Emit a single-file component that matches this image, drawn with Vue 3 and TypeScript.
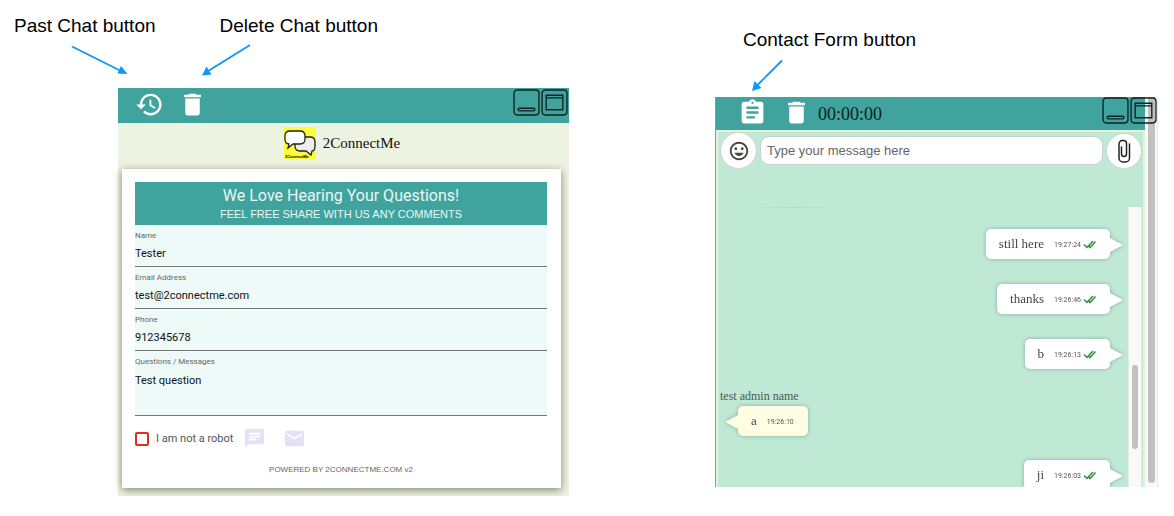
<script setup lang="ts">
import { ref } from 'vue'

interface Message {
  id: number
  text: string
  time: string
  author?: string
}

const form = ref({
  name: 'Tester',
  email: 'test@2connectme.com',
  phone: '912345678',
  question: 'Test question',
})
const notRobot = ref(false)
const draft = ref('')

const messages: Message[] = [
  { id: 1, text: 'still here', time: '19:27:24' },
  { id: 2, text: 'thanks', time: '19:26:46' },
  { id: 3, text: 'b', time: '19:26:13' },
  { id: 4, text: 'a', time: '19:26:10', author: 'test admin name' },
  { id: 5, text: 'ji', time: '19:26:03' },
]

const trashPath = 'M6 19c0 1.100.9 2 2 2h8c1.100 0 2-.9 2-2V7H6v12zM19 4h-3.500l-1-1h-5l-1 1H5v2h14V4z'
</script>

<template>
  <main class="page">
    <section class="figure figure-form">
      <div class="captions">
        <span>Past Chat button</span>
        <span>Delete Chat button</span>
      </div>
      <svg class="arrows" width="270" height="88" viewBox="0 0 270 88" aria-hidden="true">
        <path class="shaft" d="M72 46.500 120 70.500M250 45 209 70.500" />
        <path class="tip" d="M127.500 74 117.500 73.500 121 66zM202 75.500 206.500 66.500 211.500 74.500z" />
      </svg>

      <div class="widget contact">
        <header class="bar">
          <button class="icon-btn" type="button" aria-label="Past chat">
            <svg viewBox="0 0 24 24"><path d="M13 3c-4.970 0-9 4.030-9 9H1l3.890 3.890.070.140L9 12H6c0-3.870 3.130-7 7-7s7 3.130 7 7-3.130 7-7 7c-1.930 0-3.680-.790-4.940-2.060l-1.420 1.420C8.270 19.990 10.510 21 13 21c4.970 0 9-4.030 9-9s-4.030-9-9-9zm-1 5v5l4.280 2.540.720-1.210-3.500-2.080V8H12z" /></svg>
          </button>
          <button class="icon-btn" type="button" aria-label="Delete chat">
            <svg viewBox="0 0 24 24"><path :d="trashPath" /></svg>
          </button>
          <div class="window-btns">
            <button type="button" aria-label="Minimize">
              <svg viewBox="0 0 26 26"><rect x="1" y="1" width="24" height="24" rx="3" /><rect x="5" y="18.500" width="16" height="2.500" rx="1" /></svg>
            </button>
            <button type="button" aria-label="Maximize">
              <svg viewBox="0 0 26 26"><rect x="1" y="1" width="24" height="24" rx="3" /><path d="M5 6h16v14H5zM5 8.500h16" /></svg>
            </button>
          </div>
        </header>

        <div class="brand">
          <svg class="logo" viewBox="0 0 32 32" aria-hidden="true">
            <rect width="32" height="32" fill="#fdfd38" />
            <path d="M16 10h10q5 0 5 5v4q0 5-3 5l-1 4-5-4h-6q-5 0-5-5v-4q0-5 5-5z" fill="#eee" stroke="#222" stroke-width="1.300" />
            <path d="M6 4h10q5 0 5 5v3q0 5-5 5H9l-5 4 1-4q-4 0-4-5V9q0-5 5-5z" fill="#fff" stroke="#222" stroke-width="1.300" />
            <text x="1" y="31" font-size="4" font-weight="700">2ConnectMe</text>
          </svg>
          <span>2ConnectMe</span>
        </div>

        <form class="card" @submit.prevent>
          <div class="banner">
            <h1>We Love Hearing Your Questions!</h1>
            <p>FEEL FREE SHARE WITH US ANY COMMENTS</p>
          </div>
          <div class="field">
            <label for="name">Name</label>
            <input id="name" v-model="form.name" type="text" />
          </div>
          <div class="field">
            <label for="email">Email Address</label>
            <input id="email" v-model="form.email" type="email" />
          </div>
          <div class="field">
            <label for="phone">Phone</label>
            <input id="phone" v-model="form.phone" type="tel" />
          </div>
          <div class="field">
            <label for="question">Questions / Messages</label>
            <textarea id="question" v-model="form.question"></textarea>
          </div>
          <div class="actions">
            <label class="robot"><input v-model="notRobot" type="checkbox" />I am not a robot</label>
            <button class="send chat" type="button" aria-label="Send as chat">
              <svg viewBox="0 0 24 24"><path d="M20 2H4c-1.100 0-1.990.9-1.990 2L2 22l4-4h14c1.100 0 2-.9 2-2V4c0-1.100-.9-2-2-2zM6 9h12v2H6V9zm8 5H6v-2h8v2zm4-6H6V6h12v2z" /></svg>
            </button>
            <button class="send" type="button" aria-label="Send as mail">
              <svg viewBox="0 0 24 24"><path d="M20 4H4c-1.100 0-1.990.9-1.990 2L2 18c0 1.100.9 2 2 2h16c1.100 0 2-.9 2-2V6c0-1.100-.9-2-2-2zm0 4l-8 5-8-5V6l8 5 8-5v2z" /></svg>
            </button>
          </div>
          <p class="powered">POWERED BY 2CONNECTME.COM v2</p>
        </form>
      </div>
    </section>

    <section class="figure figure-chat">
      <div class="captions">
        <span>Contact Form button</span>
      </div>
      <svg class="arrows" width="80" height="97" viewBox="0 0 80 97" aria-hidden="true">
        <path class="shaft" d="M67 60.500 43 84.500" />
        <path class="tip" d="M37 91 39.500 81 46.500 88z" />
      </svg>

      <div class="widget live">
        <div class="live-main">
          <header class="bar">
            <button class="icon-btn" type="button" aria-label="Contact form">
              <svg viewBox="0 0 24 24"><path d="M19 3h-4.180C14.400 1.840 13.300 1 12 1c-1.300 0-2.400.84-2.820 2H5c-1.100 0-2 .9-2 2v14c0 1.100.9 2 2 2h14c1.100 0 2-.9 2-2V5c0-1.100-.9-2-2-2zm-7 0c.55 0 1 .45 1 1s-.45 1-1 1-1-.45-1-1 .45-1 1-1zm2 14H7v-2h7v2zm3-4H7v-2h10v2zm0-4H7V7h10v2z" /></svg>
            </button>
            <button class="icon-btn" type="button" aria-label="Delete chat">
              <svg viewBox="0 0 24 24"><path :d="trashPath" /></svg>
            </button>
            <time class="timer">00:00:00</time>
          </header>

          <div class="chat-body">
            <div class="composer">
              <button class="round emoji" type="button" aria-label="Emoji">
                <svg viewBox="0 0 24 24"><path d="M11.990 2C6.470 2 2 6.480 2 12s4.470 10 9.990 10C17.520 22 22 17.520 22 12S17.520 2 11.990 2zM12 20c-4.420 0-8-3.580-8-8s3.580-8 8-8 8 3.580 8 8-3.580 8-8 8zm3.500-9c.83 0 1.500-.67 1.500-1.500S16.330 8 15.500 8 14 8.670 14 9.500s.67 1.500 1.500 1.500zm-7 0c.83 0 1.500-.67 1.500-1.500S9.330 8 8.500 8 7 8.670 7 9.500 7.670 11 8.500 11zM7 14c.8 2 2.700 3.500 5 3.500s4.200-1.500 5-3.500z" /></svg>
              </button>
              <input v-model="draft" type="text" placeholder="Type your message here" aria-label="Message" />
              <button class="round clip" type="button" aria-label="Attach a file">
                <svg viewBox="0 0 14 26"><path d="M4.500 9v7a2.500 2.500 0 0 0 5 0V5.500a3 3 0 0 0-3-3h-1a3.500 3.500 0 0 0-3.500 3.500V20a4 4 0 0 0 4 4h2.500a4 4 0 0 0 4-4V6" /></svg>
              </button>
            </div>

            <div class="conversation">
              <ul class="messages">
                <li v-for="m in messages" :key="m.id" :class="{ admin: m.author }">
                  <span v-if="m.author" class="author">{{ m.author }}</span>
                  <div class="bubble">
                    <span class="text">{{ m.text }}</span>
                    <time>{{ m.time }}</time>
                    <svg v-if="!m.author" class="ticks" viewBox="0 0 13 9" aria-hidden="true"><path d="M1 4.500 4 7.500 10 1M5 5 7 7.500 12.500 1.500" /></svg>
                  </div>
                </li>
              </ul>
              <div class="track"><div class="thumb"></div></div>
            </div>
          </div>
        </div>
        <div class="outer-track"><div class="thumb"></div></div>
        <div class="window-btns">
          <button type="button" aria-label="Minimize">
            <svg viewBox="0 0 26 26"><rect x="1" y="1" width="24" height="24" rx="3" /><rect x="5" y="18.500" width="16" height="2.500" rx="1" /></svg>
          </button>
          <button type="button" aria-label="Maximize">
            <svg viewBox="0 0 26 26"><rect x="1" y="1" width="24" height="24" rx="3" /><path d="M5 6h16v14H5zM5 8.500h16" /></svg>
          </button>
        </div>
      </div>
    </section>
  </main>
</template>

<style>
body {
  margin: 0;
  background: #fff;
}
</style>

<style scoped>
* {
  box-sizing: border-box;
}
.page {
  display: flex;
  align-items: flex-start;
  gap: 146px;
  padding-right: 16px;
  font-family: Roboto, sans-serif;
}
.figure {
  position: relative;
  min-width: 0;
}
.figure-form {
  flex: 569 1 0;
}
.figure-chat {
  flex: 443 1 0;
}
.captions {
  display: flex;
  gap: 64px;
  height: 88px;
  padding: 14px 0 0 14px;
  font: 19px/24px "Liberation Sans", sans-serif;
  color: #000;
  white-space: nowrap;
}
.figure-chat .captions {
  height: 97px;
  padding: 28px 0 0 28px;
}
.arrows {
  position: absolute;
  top: 0;
  left: 0;
}
.shaft {
  fill: none;
  stroke: #0d96fb;
  stroke-width: 1.800;
}
.tip {
  fill: #0d96fb;
}
button {
  display: flex;
  padding: 0;
  border: 0;
  background: none;
  cursor: pointer;
}
.widget {
  position: relative;
}
.bar {
  display: flex;
  align-items: center;
  background: #40a39d;
}
.icon-btn svg {
  width: 29px;
  height: 29px;
  fill: #fff;
}
.window-btns {
  position: absolute;
  top: 1px;
  right: 1px;
  display: flex;
  gap: 1px;
}
.window-btns svg {
  width: 27px;
  height: 27px;
  fill: none;
  stroke: #0d2423;
  stroke-width: 1.300;
}

.contact {
  margin-left: 118px;
  padding-bottom: 8px;
  background: #ecf3e0;
}
.contact .bar {
  height: 35px;
  gap: 14px;
  padding: 0 0 2px 17px;
}
.brand {
  display: flex;
  align-items: center;
  justify-content: center;
  gap: 7px;
  height: 46px;
  padding: 0 3px 6px 0;
  font: 15px/20px "Liberation Serif", serif;
  color: #111;
}
.logo {
  width: 32px;
  height: 32px;
}
.logo text {
  font-family: "Liberation Sans", sans-serif;
}
.card {
  margin: 0 8px 0 4px;
  padding: 13px 14px 12px 13px;
  background: #fff;
  box-shadow: 0 2px 8px rgba(50, 65, 40, 0.6);
}
.banner {
  height: 43px;
  padding-top: 3px;
  background: #40a39d;
  color: #e8f8f6;
  text-align: center;
}
.banner h1 {
  margin: 0;
  font-size: 16px;
  line-height: 22px;
  font-weight: 400;
}
.banner p {
  margin: 0;
  font: 11px/14px "Liberation Sans", sans-serif;
}
.field {
  display: flex;
  flex-direction: column;
  padding-top: 6px;
  border-bottom: 1px solid #777;
  background: #eefaf8;
}
.field label {
  font-size: 8px;
  line-height: 10px;
  color: #666;
}
.field input,
.field textarea {
  width: 100%;
  height: 25px;
  padding: 0;
  border: 0;
  outline: 0;
  background: none;
  color: #111;
  font: 11px/16px Roboto, sans-serif;
  resize: none;
}
.field textarea {
  height: 48px;
  padding-top: 6px;
}
.actions {
  display: flex;
  align-items: center;
  height: 45px;
}
.robot {
  display: flex;
  align-items: center;
  gap: 7px;
  font-size: 11px;
  line-height: 16px;
  color: #555;
}
.robot input {
  appearance: none;
  width: 14px;
  height: 14px;
  margin: 0;
  border: 2px solid #d93020;
  border-radius: 2px;
}
.robot input:checked {
  background: #d93020;
}
.send {
  margin-left: 17px;
}
.send.chat {
  margin-left: 10px;
}
.send svg {
  width: 23px;
  height: 23px;
  fill: #e2e1f7;
}
.powered {
  margin: 3px 0 0;
  font: 8px/12px "Liberation Sans", sans-serif;
  color: #666;
  text-align: center;
}

.live {
  display: flex;
  border-left: 1px solid #8a9995;
}
.live .window-btns {
  top: 0;
}
.live-main {
  flex: 1;
  min-width: 0;
}
.live .bar {
  height: 33px;
  gap: 15px;
  padding: 0 0 2px 22px;
}
.timer {
  margin-left: -8px;
  padding-top: 2px;
  font: 18px/22px "Liberation Serif", serif;
  color: #0b2221;
}
.chat-body {
  border: solid #e6f1da;
  border-width: 2px 2px 0;
  background: #bfe9d5;
}
.composer {
  display: flex;
  align-items: center;
  gap: 3px;
  height: 37px;
  padding: 0 1px 0 2px;
}
.composer input {
  flex: 1;
  min-width: 0;
  height: 29px;
  padding: 0 6px;
  border: 1px solid #c9d1cd;
  border-radius: 9px;
  outline: 0;
  background: #fff;
  font: 13px/20px "Liberation Sans", sans-serif;
}
.composer input::placeholder {
  color: #666;
  opacity: 1;
}
.round {
  align-items: center;
  justify-content: center;
  flex: none;
  width: 37px;
  height: 37px;
  border: 1px solid #ccd4d0;
  border-radius: 50%;
  background: #fff;
}
.round.clip {
  width: 36px;
  height: 36px;
}
.emoji svg {
  width: 22px;
  height: 22px;
  fill: #4a4543;
}
.clip svg {
  width: 14px;
  height: 26px;
  fill: none;
  stroke: #222;
  stroke-width: 1.500;
  stroke-linecap: round;
}
.conversation {
  display: flex;
  height: 280px;
  margin-top: 38px;
  overflow: hidden;
}
.messages {
  display: flex;
  flex: 1;
  flex-direction: column;
  gap: 25px;
  min-width: 0;
  margin: 0;
  padding: 22px 18px 0 2px;
  list-style: none;
}
.messages::before {
  content: "";
  flex: none;
  width: 110px;
  height: 1px;
  margin: -22px 0 -4px 19px;
  background: linear-gradient(90deg, transparent, #b3dac8, transparent);
}
.messages li {
  display: flex;
  flex: none;
  flex-direction: column;
  align-items: flex-end;
}
.messages .admin {
  align-items: flex-start;
  margin: -6px 0 -1px;
}
.author {
  margin-bottom: 2px;
  font: 12px/16px "Liberation Serif", serif;
  color: #4d5a53;
}
.bubble {
  position: relative;
  display: flex;
  align-items: center;
  height: 30px;
  padding: 0 14px 0 13px;
  border-radius: 5px;
  background: #fff;
  filter: drop-shadow(0 0 2px rgba(70, 100, 85, 0.45));
}
.bubble::after {
  content: "";
  position: absolute;
  top: 9px;
  left: 100%;
  border: solid transparent;
  border-width: 7px 0 7px 13px;
  border-left-color: #fff;
}
.text {
  margin-right: 10px;
  font: 13px/16px "Liberation Serif", serif;
  color: #4a4442;
}
.bubble time {
  padding-top: 2px;
  font-size: 7px;
  line-height: 10px;
  color: #555;
}
.ticks {
  width: 13px;
  height: 9px;
  margin-left: 2px;
  fill: none;
  stroke: #2e9140;
  stroke-width: 1.500;
}
.admin .bubble {
  margin-left: 18px;
  background: #fffee3;
}
.admin .bubble::after {
  right: 100%;
  left: auto;
  border-width: 7px 13px 7px 0;
  border-right-color: #fffee3;
}
.track {
  flex: none;
  width: 14px;
  margin-right: 1px;
  padding: 158px 3px 0;
  border: solid #e3e8e5;
  border-width: 0 1px;
  background: #f9f9f9;
}
.thumb {
  border-radius: 4px;
  background: #c1c1c1;
}
.track .thumb {
  height: 84px;
}
.outer-track {
  flex: none;
  width: 13px;
  padding: 0 2px 4px 3px;
  border-right: 1px solid #e8e8e8;
  background: #f9f9f9;
}
.outer-track .thumb {
  height: 100%;
  border-radius: 0 0 4px 4px;
}
</style>
